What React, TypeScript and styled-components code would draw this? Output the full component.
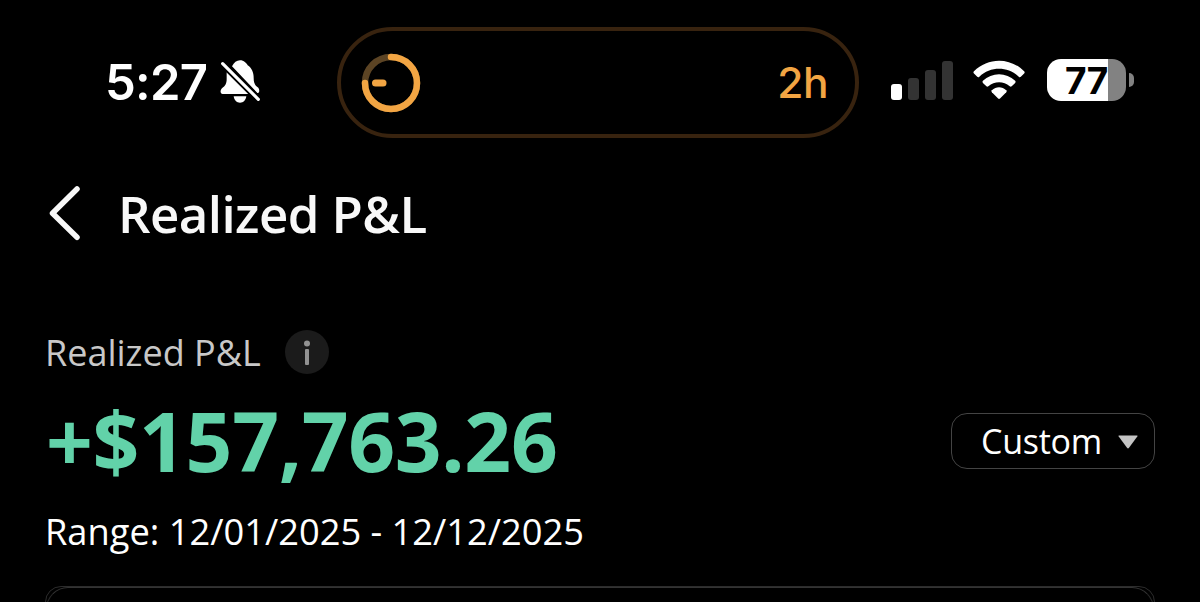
import React from "react";
import styled, { createGlobalStyle } from "styled-components";

const GlobalStyle = createGlobalStyle`
  * {
    box-sizing: border-box;
  }
  body {
    margin: 0;
    background: #000000;
    color: #ffffff;
    font-family: "Open Sans", "Noto Sans", sans-serif;
  }
`;

const Screen = styled.main`
  width: 1200px;
  height: 602px;
  overflow: hidden;
  background: #000000;
`;

const StatusBar = styled.header`
  display: flex;
  align-items: center;
  height: 111px;
  margin-top: 27px;
  padding: 0 66px 0 105px;
  font-family: Inter, sans-serif;
`;

const ClockGroup = styled.div`
  display: flex;
  align-items: center;
  width: 232px;
  margin-top: -1px;
`;

const Time = styled.span`
  width: 113.5px;
  padding-top: 2px;
  font-size: 49px;
  line-height: 60px;
  font-weight: 600;
  letter-spacing: -0.7px;
  white-space: nowrap;
`;

const BellOff = styled.svg`
  margin-top: -1px;
`;

const Island = styled.div`
  display: flex;
  align-items: center;
  justify-content: space-between;
  width: 522px;
  height: 111px;
  padding: 0 27px 0 20px;
  border: 4px solid #38230f;
  border-radius: 58px;
`;

const IslandLabel = styled.span`
  color: #f2a543;
  font-size: 42.5px;
  font-weight: 500;
  letter-spacing: -0.5px;
  line-height: 54px;
`;

const Indicators = styled.div`
  display: flex;
  align-items: center;
  width: 243px;
  margin-left: 32px;
`;

const Signal = styled.div`
  display: flex;
  align-items: flex-end;
  gap: 6px;
  width: 82px;
  height: 39px;
  margin-top: -5px;
`;

const SignalBar = styled.i<{ $height: number; $active?: boolean }>`
  width: 11px;
  height: ${(props) => props.$height}px;
  border-radius: 3px;
  background: ${(props) => (props.$active ? "#ffffff" : "#333333")};
`;

const Wifi = styled.svg`
  margin-top: -5px;
`;

const Battery = styled.div`
  display: flex;
  align-items: center;
  gap: 3px;
  margin: -5px 0 0 20px;
`;

const BatteryBody = styled.div`
  width: 79px;
  height: 42px;
  border-radius: 14px;
  background: linear-gradient(to right, #ffffff 61px, #828282 61px);
  color: #000000;
  font-size: 37px;
  font-weight: 650;
  letter-spacing: -0.5px;
  line-height: 44px;
  text-align: center;
`;

const BatteryTip = styled.i`
  width: 5px;
  height: 14px;
  border-radius: 0 7px 7px 0;
  background: #828282;
`;

const TitleBar = styled.div`
  display: flex;
  align-items: center;
  height: 70px;
  margin-top: 40px;
  padding-left: 48px;
`;

const Title = styled.h1`
  margin: -1px 0 0 36px;
  color: #f8f8f8;
  font-size: 51px;
  font-weight: 600;
  letter-spacing: -0.58px;
  line-height: 70px;
`;

const Summary = styled.section`
  padding: 76px 45px 0;
`;

const LabelRow = styled.div`
  display: flex;
  align-items: center;
  gap: 24px;
  height: 56px;
`;

const Label = styled.span`
  padding-top: 2px;
  color: #c8c8c8;
  font-size: 36px;
  line-height: 56px;
`;

const AmountRow = styled.div`
  display: flex;
  align-items: center;
  justify-content: space-between;
  height: 122px;
`;

const Amount = styled.strong`
  margin-top: -2px;
  padding-left: 1px;
  color: #62d2a9;
  font-size: 82px;
  font-weight: 700;
  letter-spacing: -0.35px;
  line-height: 120px;
`;

const RangeSelect = styled.button`
  display: flex;
  align-items: center;
  width: 204px;
  height: 56px;
  padding: 0 16px 0 29px;
  justify-content: space-between;
  border: 1.5px solid #444444;
  border-radius: 16px;
  background: #000000;
  color: #ffffff;
  font-family: inherit;
  font-size: 34px;
  letter-spacing: -0.25px;
  line-height: 50px;
`;

const Caret = styled.svg`
  margin-top: 2px;
`;

const RangeText = styled.p`
  margin: 1px 0 0;
  font-size: 36.25px;
  line-height: 56px;
`;

const Card = styled.div`
  height: 60px;
  margin-top: 27px;
  border: 1px solid #2c2c2c;
  border-radius: 16px;
`;

const CardInner = styled.div`
  height: 58px;
  border-top: 1px solid #333333;
  border-left: 1px solid #262626;
  border-right: 1px solid #262626;
  border-radius: 22px;
`;

const BellOffIcon = () => (
  <BellOff width="42" height="45" viewBox="385 58 126 135" fill="#ffffff">
    <path d="M424 80C430 68 438 62 448 62C460 62 467 70 471 77C483 84 489 99 489 115C489 130 493 137 503 144C508 152 506 160 500 160Z" />
    <path d="M408 98L474 163H396C388 162 388 152 394 146C404 138 408 132 408 118Z" />
    <path d="M429 170H467C465 182 458 189 448 189S431 182 429 170Z" />
    <path d="M396 72L503 179" stroke="#000000" strokeWidth="20" />
    <path d="M396 72L503 179" stroke="#ffffff" strokeWidth="9.5" strokeLinecap="round" />
  </BellOff>
);

const TimerIcon = () => (
  <svg width="60" height="60" viewBox="0 0 60 60" fill="none" strokeWidth="6.5">
    <circle cx="30" cy="30" r="26" stroke="#5c4424" />
    <path d="M30 4A26 26 0 1 1 4 30" stroke="#f2a543" strokeLinecap="round" />
    <path d="M14.5 30H22" stroke="#f2a543" strokeWidth="7" strokeLinecap="round" />
  </svg>
);

const WifiIcon = () => (
  <Wifi width="55" height="40" viewBox="0 0 55 40" fill="#ffffff">
    <path d="M2 11.2C16 -3 38.5 -3 52.5 11.2Q53.6 12.4 52.5 13.5L49.2 16.8Q48.2 17.7 47.1 16.7C36 6 18.5 6 7.4 16.7Q6.3 17.7 5.3 16.8L2 13.5Q.9 12.4 2 11.2Z" />
    <path d="M11 20.8C20 12 34.5 12 43.5 20.8Q44.5 21.9 43.5 23L40 26.4Q39 27.3 38 26.4C32 20.8 22.5 20.8 16.5 26.4Q15.5 27.3 14.5 26.4L11 23Q10 21.9 11 20.8Z" />
    <path d="M20 30.3C24.3 26.4 30.2 26.4 34.5 30.3Q35.5 31.3 34.5 32.3L28.2 38.6Q27.25 39.5 26.3 38.6L20 32.3Q19 31.3 20 30.3Z" />
  </Wifi>
);

const BackIcon = () => (
  <svg width="34" height="56" viewBox="0 0 34 56" fill="none">
    <path
      d="M29 4L4.5 28.3L29 52.3"
      stroke="#f8f8f8"
      strokeWidth="5.5"
      strokeLinecap="round"
      strokeLinejoin="round"
    />
  </svg>
);

const InfoIcon = () => (
  <svg width="44" height="44" viewBox="0 0 44 44">
    <circle cx="22" cy="22" r="22" fill="#1b1b1b" />
    <circle cx="22" cy="13.6" r="3" fill="#929292" />
    <rect x="20" y="19" width="4" height="16" rx="1" fill="#929292" />
  </svg>
);

const CaretIcon = () => (
  <Caret width="20" height="14" viewBox="0 0 20 14">
    <path d="M1 .5H19Q20 .5 19.3 1.6L11 12.8Q10 14 9 12.8L.7 1.6Q0 .5 1 .5Z" fill="#c4c4c4" />
  </Caret>
);

const App = () => {
  return (
    <>
      <GlobalStyle />
      <Screen>
        <StatusBar>
          <ClockGroup>
            <Time>5:27</Time>
            <BellOffIcon />
          </ClockGroup>
          <Island>
            <TimerIcon />
            <IslandLabel>2h</IslandLabel>
          </Island>
          <Indicators>
            <Signal>
              <SignalBar $height={16} $active />
              <SignalBar $height={22} />
              <SignalBar $height={30} />
              <SignalBar $height={39} />
            </Signal>
            <WifiIcon />
            <Battery>
              <BatteryBody>77</BatteryBody>
              <BatteryTip />
            </Battery>
          </Indicators>
        </StatusBar>
        <TitleBar>
          <BackIcon />
          <Title>Realized P&amp;L</Title>
        </TitleBar>
        <Summary>
          <LabelRow>
            <Label>Realized P&amp;L</Label>
            <InfoIcon />
          </LabelRow>
          <AmountRow>
            <Amount>+$157,763.26</Amount>
            <RangeSelect>
              Custom
              <CaretIcon />
            </RangeSelect>
          </AmountRow>
          <RangeText>Range: 12/01/2025 - 12/12/2025</RangeText>
          <Card>
            <CardInner />
          </Card>
        </Summary>
      </Screen>
    </>
  );
};

export default App;
